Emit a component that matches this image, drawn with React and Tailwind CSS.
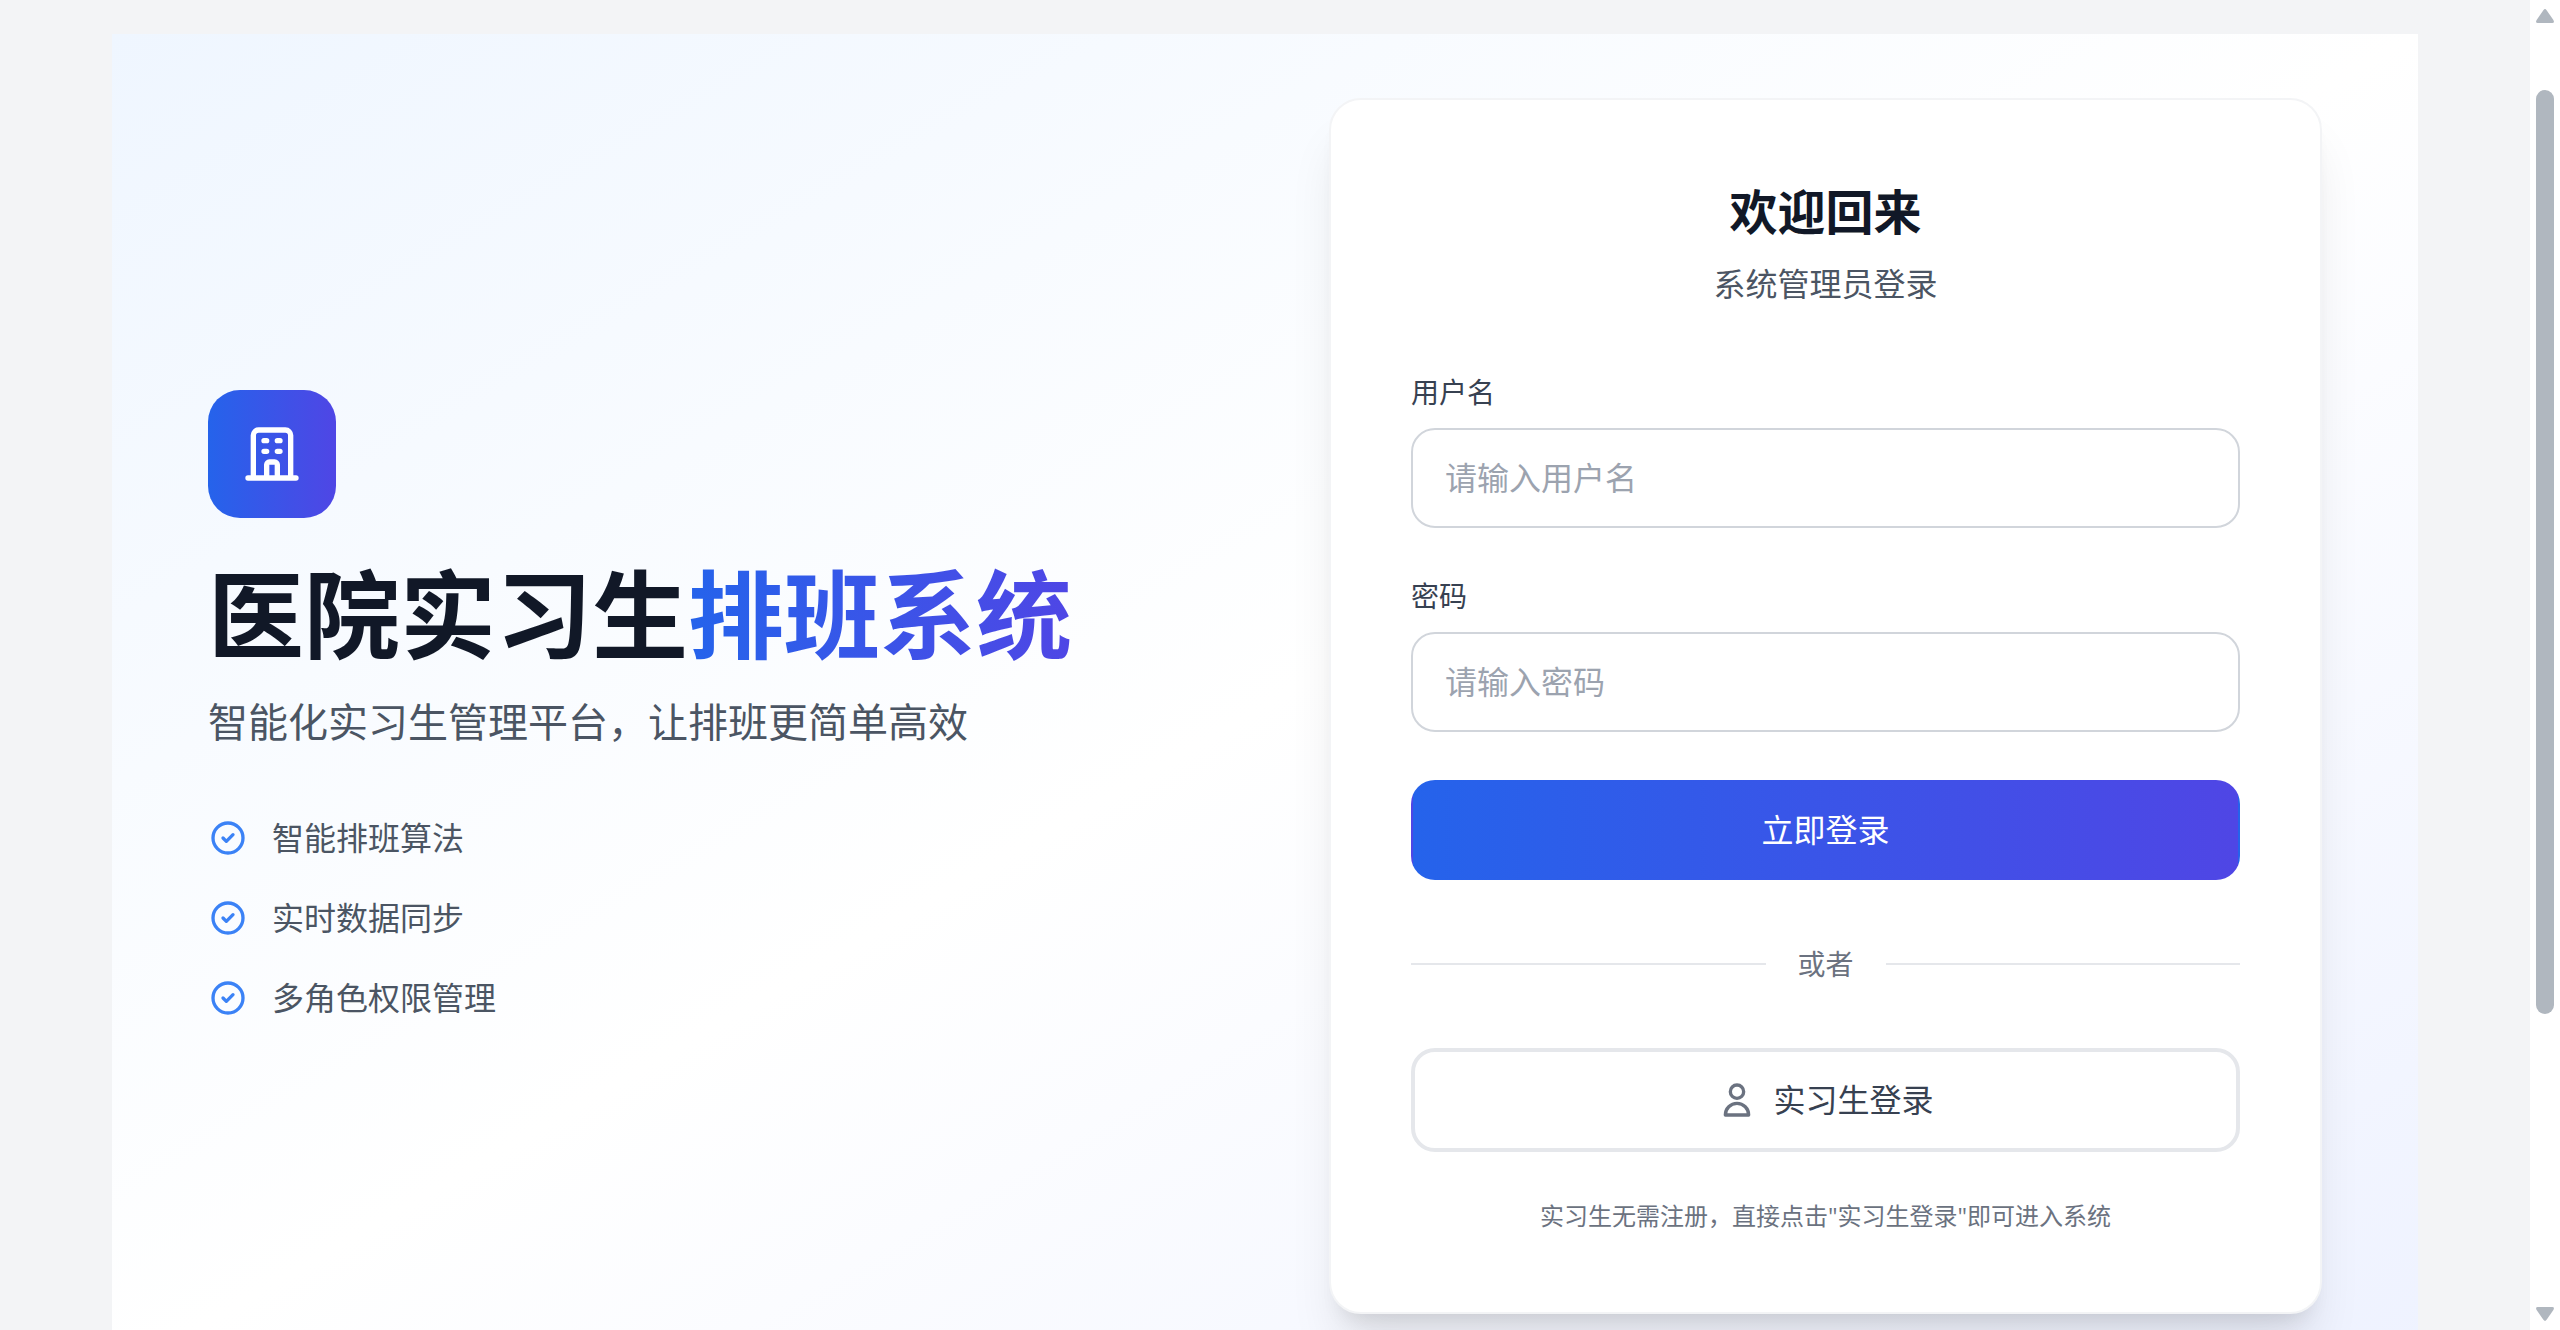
import React from 'react';

const features = ['智能排班算法', '实时数据同步', '多角色权限管理'];

const CheckCircleIcon = () => (
  <svg
    className="size-10 shrink-0 text-[#3b82f6]"
    fill="none"
    stroke="currentColor"
    viewBox="0 0 24 24"
    aria-hidden="true"
  >
    <path
      strokeLinecap="round"
      strokeLinejoin="round"
      strokeWidth={2}
      d="M9 12l2 2 4-4m6 2a9 9 0 11-18 0 9 9 0 0118 0z"
    />
  </svg>
);

const BuildingIcon = () => (
  <svg
    className="size-16 text-white"
    fill="none"
    stroke="currentColor"
    viewBox="0 0 24 24"
    aria-hidden="true"
  >
    <path
      strokeLinecap="round"
      strokeLinejoin="round"
      strokeWidth={2}
      d="M19 21V5a2 2 0 00-2-2H7a2 2 0 00-2 2v16m14 0h2m-2 0h-5m-9 0H3m2 0h5M9 7h1m-1 4h1m4-4h1m-1 4h1m-5 10v-5a1 1 0 011-1h2a1 1 0 011 1v5m-4 0h4"
    />
  </svg>
);

const UserIcon = () => (
  <svg
    className="size-10 text-[#6b7280]"
    fill="none"
    stroke="currentColor"
    viewBox="0 0 24 24"
    aria-hidden="true"
  >
    <path
      strokeLinecap="round"
      strokeLinejoin="round"
      strokeWidth={2}
      d="M16 7a4 4 0 11-8 0 4 4 0 018 0zM12 14a7 7 0 00-7 7h14a7 7 0 00-7-7z"
    />
  </svg>
);

const Field = ({ id, label, type, placeholder }) => (
  <div>
    <label
      htmlFor={id}
      className="block mb-4 text-[28px] leading-10 text-[#374151]"
    >
      {label}
    </label>
    <input
      id={id}
      type={type}
      placeholder={placeholder}
      className="block w-full px-8 py-6 text-[32px] leading-12 bg-white border-2 border-[#d1d5db] rounded-3xl outline-none placeholder:text-[#9ca3af] focus:border-[#3b82f6]"
    />
  </div>
);

const Intro = () => (
  <section>
    <div className="flex items-center justify-center size-32 mb-12 rounded-4xl bg-linear-to-r/srgb from-[#2563eb] to-[#4f46e5]">
      <BuildingIcon />
    </div>
    <h1 className="mb-8 text-8xl leading-none font-bold text-[#111827] whitespace-nowrap">
      医院实习生
      <span className="text-transparent bg-clip-text bg-linear-to-r/srgb from-[#2563eb] to-[#4f46e5]">
        排班系统
      </span>
    </h1>
    <p className="mb-16 text-[40px] leading-14 text-[#4b5563]">
      智能化实习生管理平台，让排班更简单高效
    </p>
    <ul className="space-y-8">
      {features.map((feature) => (
        <li key={feature} className="flex items-center gap-6">
          <CheckCircleIcon />
          <span className="text-[32px] leading-12 text-[#4b5563]">{feature}</span>
        </li>
      ))}
    </ul>
  </section>
);

const LoginCard = () => (
  <section className="p-20 bg-white border-2 border-[#f3f4f6] rounded-4xl shadow-[0_40px_50px_-10px_rgba(0,0,0,0.1),0_16px_20px_-12px_rgba(0,0,0,0.1)]">
    <div className="mb-16 text-center">
      <h2 className="mb-4 text-5xl leading-16 font-bold text-[#111827]">欢迎回来</h2>
      <p className="text-[32px] leading-12 text-[#4b5563]">系统管理员登录</p>
    </div>

    <form className="space-y-12" onSubmit={(e) => e.preventDefault()}>
      <Field id="username" label="用户名" type="text" placeholder="请输入用户名" />
      <Field id="password" label="密码" type="password" placeholder="请输入密码" />
      <button
        type="submit"
        className="block w-full px-8 py-6 text-[32px] leading-12 text-white border-2 border-transparent rounded-3xl bg-linear-to-r/srgb from-[#2563eb] to-[#4f46e5]"
      >
        立即登录
      </button>
    </form>

    <div className="flex items-center my-16">
      <div className="flex-1 h-0.5 bg-[#e5e7eb]" />
      <span className="px-8 text-[28px] leading-10 text-[#6b7280]">或者</span>
      <div className="flex-1 h-0.5 bg-[#e5e7eb]" />
    </div>

    <button
      type="button"
      className="flex items-center justify-center gap-4 w-full px-8 py-6 text-[32px] leading-12 text-[#374151] bg-white border-4 border-[#e5e7eb] rounded-3xl"
    >
      <UserIcon />
      实习生登录
    </button>

    <p className="mt-12 text-2xl leading-8 text-center text-[#6b7280]">
      实习生无需注册，直接点击"实习生登录"即可进入系统
    </p>
  </section>
);

const ScrollRail = () => (
  <div className="flex flex-col items-center justify-between w-[30px] shrink-0 py-2 bg-white">
    <svg className="w-[18px] h-4" viewBox="0 0 18 16" fill="#b0b7bf" aria-hidden="true">
      <path d="M7.4 2.2Q9 0 10.6 2.2L17.4 12Q18.8 15 16.4 15H1.6Q-.8 15 .6 12Z" />
    </svg>
    <div className="flex flex-col w-[18px] flex-1 pt-[66px]">
      <div className="h-[76%] rounded-full bg-[#b0b7bf]" />
    </div>
    <svg className="w-[18px] h-4" viewBox="0 0 18 16" fill="#b0b7bf" aria-hidden="true">
      <path d="M7.4 13.8Q9 16 10.6 13.8L17.4 4Q18.8 1 16.4 1H1.6Q-.8 1 .6 4Z" />
    </svg>
  </div>
);

const App = () => {
  return (
    <div
      lang="zh-CN"
      className="flex h-screen overflow-hidden bg-[#f3f4f6] font-['Open_Sans','Noto_Sans_CJK_SC',sans-serif]"
    >
      <main className="flex-1 px-28 pt-[34px]">
        <div className="grid grid-cols-2 items-center gap-32 px-24 py-16 bg-linear-to-br/srgb from-[#eff6ff] via-white to-[#eef2ff]">
          <Intro />
          <LoginCard />
        </div>
      </main>
      <ScrollRail />
    </div>
  );
};

export default App;
